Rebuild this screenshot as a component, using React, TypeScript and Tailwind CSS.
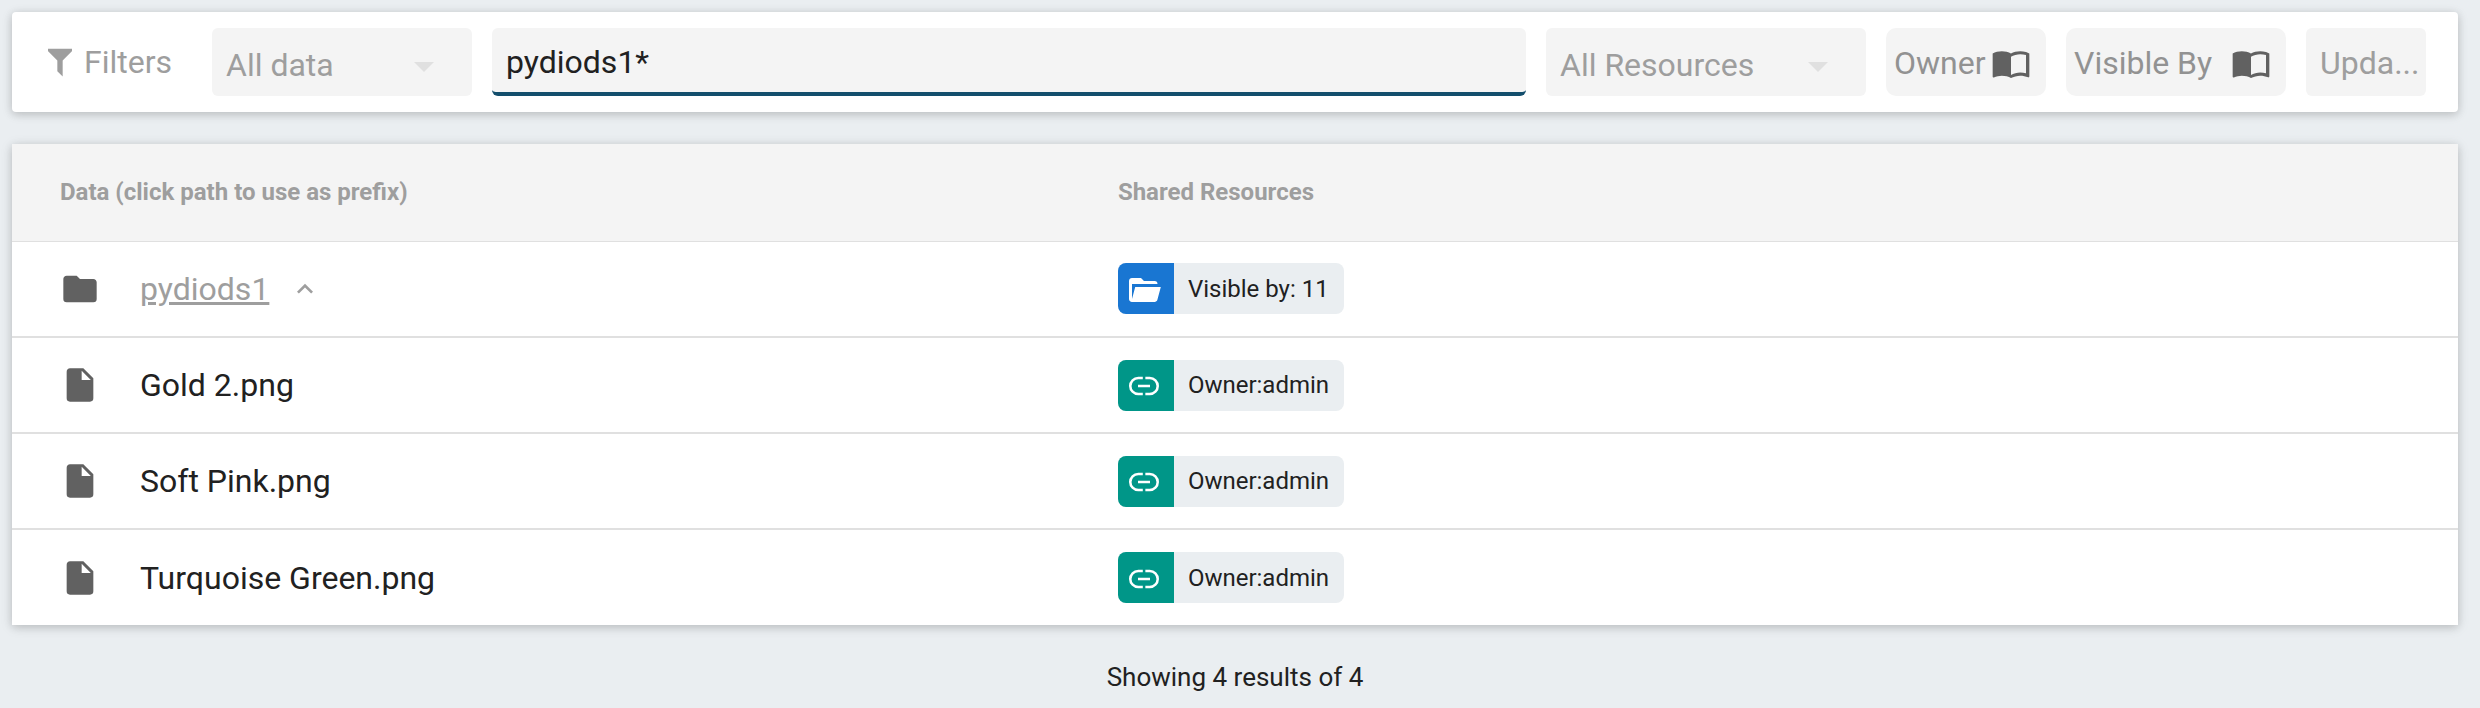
import { useState } from "react";

function Icon({ d, className }: { d: string; className: string }) {
  return (
    <svg viewBox="0 0 24 24" fill="currentColor" aria-hidden="true" preserveAspectRatio="none" className={className}>
      <path d={d} />
    </svg>
  );
}

const FILTER = "M3,2H21V4H20.92L14,10.92V22.91L10,18.91V10.91L3.09,4H3V2Z";
const BOOK =
  "M21,5C19.89,4.65 18.67,4.5 17.5,4.5C15.55,4.5 13.45,4.9 12,6C10.55,4.9 8.45,4.5 6.5,4.5C4.55,4.5 2.45,4.9 1,6V20.65C1,20.9 1.25,21.15 1.5,21.15C1.6,21.15 1.65,21.1 1.75,21.1C3.1,20.45 5.05,20 6.5,20C8.45,20 10.55,20.4 12,21.5C13.35,20.65 15.8,20 17.5,20C19.15,20 20.85,20.3 22.25,21.05C22.35,21.1 22.4,21.1 22.5,21.1C22.75,21.1 23,20.85 23,20.6V6C22.4,5.55 21.75,5.25 21,5M21,18.5C19.9,18.15 18.7,18 17.5,18C15.8,18 13.35,18.65 12,19.5V8C13.35,7.15 15.8,6.5 17.5,6.5C18.7,6.5 19.9,6.65 21,7V18.5Z";
const FOLDER =
  "M10,4H4C2.89,4 2,4.89 2,6V18A2,2 0 0,0 4,20H20A2,2 0 0,0 22,18V8C22,6.89 21.1,6 20,6H12L10,4Z";
const FILE =
  "M13,9V3.5L18.5,9M6,2C4.89,2 4,2.89 4,4V20A2,2 0 0,0 6,22H18A2,2 0 0,0 20,20V8L14,2H6Z";
const FOLDER_OPEN =
  "M19,20H4C2.89,20 2,19.1 2,18V6C2,4.89 2.89,4 4,4H10L12,6H19A2,2 0 0,1 21,8H21L4,8V18L6.14,10H23.21L20.93,18.5C20.7,19.37 19.92,20 19,20Z";
const LINK =
  "M11.2,5.8H8.2A6.2,6.2 0 0,0 8.2,18.2H11.2V16.5H8.2A4.5,4.5 0 0,1 8.2,7.5H11.2V5.8M8,12.9H16V11.1H8V12.9M12.9,5.8V7.5H15.8A4.5,4.5 0 0,1 15.8,16.5H12.9V18.2H15.8A6.2,6.2 0 0,0 15.8,5.8H12.9Z";
const CHEVRON_UP = "M7.41,15.41L12,10.83L16.59,15.41L18,14L12,8L6,14L7.41,15.41Z";

function FilterSelect({ label, options, className }: { label: string; options: string[]; className: string }) {
  return (
    <div className={`relative h-[68px] shrink-0 ${className}`}>
      <select
        aria-label={label}
        className="h-full w-full appearance-none rounded-md bg-[#f4f4f4] pt-1.5 pl-3.5 text-[32px] text-[#9e9e9e] outline-none"
      >
        {options.map((o) => (
          <option key={o}>{o}</option>
        ))}
      </select>
      <svg
        viewBox="0 0 20 10"
        aria-hidden="true"
        className="pointer-events-none absolute top-[34px] right-[38px] h-2.5 w-5 fill-[#e0e0e0]"
      >
        <path d="M0 0H20L10 10Z" />
      </svg>
    </div>
  );
}

function PickerButton({ label, className }: { label: string; className: string }) {
  return (
    <button
      type="button"
      className={`flex h-[68px] shrink-0 items-center justify-between rounded-[10px] bg-[#f4f4f4] pt-0.5 pr-[15px] pl-2 text-[32px] text-[#929292] ${className}`}
    >
      <span>{label}</span>
      <Icon d={BOOK} className="h-[38px] w-10 shrink-0 text-[#616161]" />
    </button>
  );
}

type Share = { kind: "workspace" | "link"; text: string };
type Row = { name: string; folder?: boolean; share: Share };

const rows: Row[] = [
  { name: "pydiods1", folder: true, share: { kind: "workspace", text: "Visible by: 11" } },
  { name: "Gold 2.png", share: { kind: "link", text: "Owner:admin" } },
  { name: "Soft Pink.png", share: { kind: "link", text: "Owner:admin" } },
  { name: "Turquoise Green.png", share: { kind: "link", text: "Owner:admin" } },
];

function ShareChip({ share }: { share: Share }) {
  const workspace = share.kind === "workspace";
  return (
    <div className="inline-flex h-[51px] items-center overflow-hidden rounded-lg bg-[#eaeef1] align-middle">
      <span
        className={`flex h-full w-14 items-center pt-0.5 pl-2 text-white ${workspace ? "bg-[#1976d2]" : "bg-[#009688]"}`}
      >
        <Icon d={workspace ? FOLDER_OPEN : LINK} className="size-9" />
      </span>
      <span className="pr-[15px] pl-3.5 text-2xl">{share.text}</span>
    </div>
  );
}

export default function App() {
  const [query, setQuery] = useState("pydiods1*");
  return (
    <main className="min-h-screen bg-[#eaeef1] pt-3 pr-[22px] pb-3 pl-3 font-[Roboto,sans-serif] text-[#212121]">
      <form
        onSubmit={(e) => e.preventDefault()}
        className="flex items-center gap-5 rounded bg-white py-4 pr-8 pl-8 shadow-[0_2px_12px_rgba(0,0,0,0.12),0_2px_8px_rgba(0,0,0,0.12)]"
      >
        <div className="flex w-[148px] shrink-0 items-center gap-2 text-[32px] text-[#9e9e9e]">
          <Icon d={FILTER} className="size-8" />
          <span>Filters</span>
        </div>
        <FilterSelect label="Data type" options={["All data", "Files", "Folders"]} className="w-[260px]" />
        <input
          aria-label="Path prefix"
          value={query}
          onChange={(e) => setQuery(e.target.value)}
          className="h-[68px] min-w-0 flex-1 rounded-md border-b-4 border-[#134e6c] bg-[#f4f4f4] px-3.5 pt-1 text-[32px] outline-none"
        />
        <FilterSelect
          label="Resource type"
          options={["All Resources", "Workspaces", "Public links"]}
          className="w-[320px]"
        />
        <PickerButton label="Owner" className="w-40" />
        <PickerButton label="Visible By" className="w-[220px]" />
        <button
          type="button"
          className="h-[68px] w-[120px] shrink-0 rounded-md bg-[#f4f4f4] pt-0.5 pl-3.5 text-left text-[32px] text-[#9e9e9e]"
        >
          Upda...
        </button>
      </form>

      <table className="mt-8 w-full table-fixed border-collapse bg-white text-left shadow-[0_2px_12px_rgba(0,0,0,0.12),0_2px_8px_rgba(0,0,0,0.12)]">
        <thead>
          <tr className="h-[97px] border-b border-[#e0e0e0] bg-[#f4f4f4] text-2xl text-[#9e9e9e]">
            <th className="w-[43.25%] px-12 font-bold">Data (click path to use as prefix)</th>
            <th className="px-12 font-bold">Shared Resources</th>
          </tr>
        </thead>
        <tbody>
          {rows.map((row) => (
            <tr key={row.name} className="h-24 border-b-2 border-[#e0e0e0] last:border-b-0">
              <td className="px-12">
                <div className="flex items-center text-[32px]">
                  <Icon d={row.folder ? FOLDER : FILE} className="mr-10 size-10 text-[#616161]" />
                  {row.folder ? (
                    <>
                      <a href="#pydiods1" className="text-[#9e9e9e] underline">
                        {row.name}
                      </a>
                      <button type="button" aria-label="Go to parent" className="ml-5 text-[#9e9e9e]">
                        <Icon d={CHEVRON_UP} className="size-8" />
                      </button>
                    </>
                  ) : (
                    <span>{row.name}</span>
                  )}
                </div>
              </td>
              <td className="px-12">
                <ShareChip share={row.share} />
              </td>
            </tr>
          ))}
        </tbody>
      </table>

      <p className="mt-[33px] text-center text-[26px]">Showing 4 results of 4</p>
    </main>
  );
}
